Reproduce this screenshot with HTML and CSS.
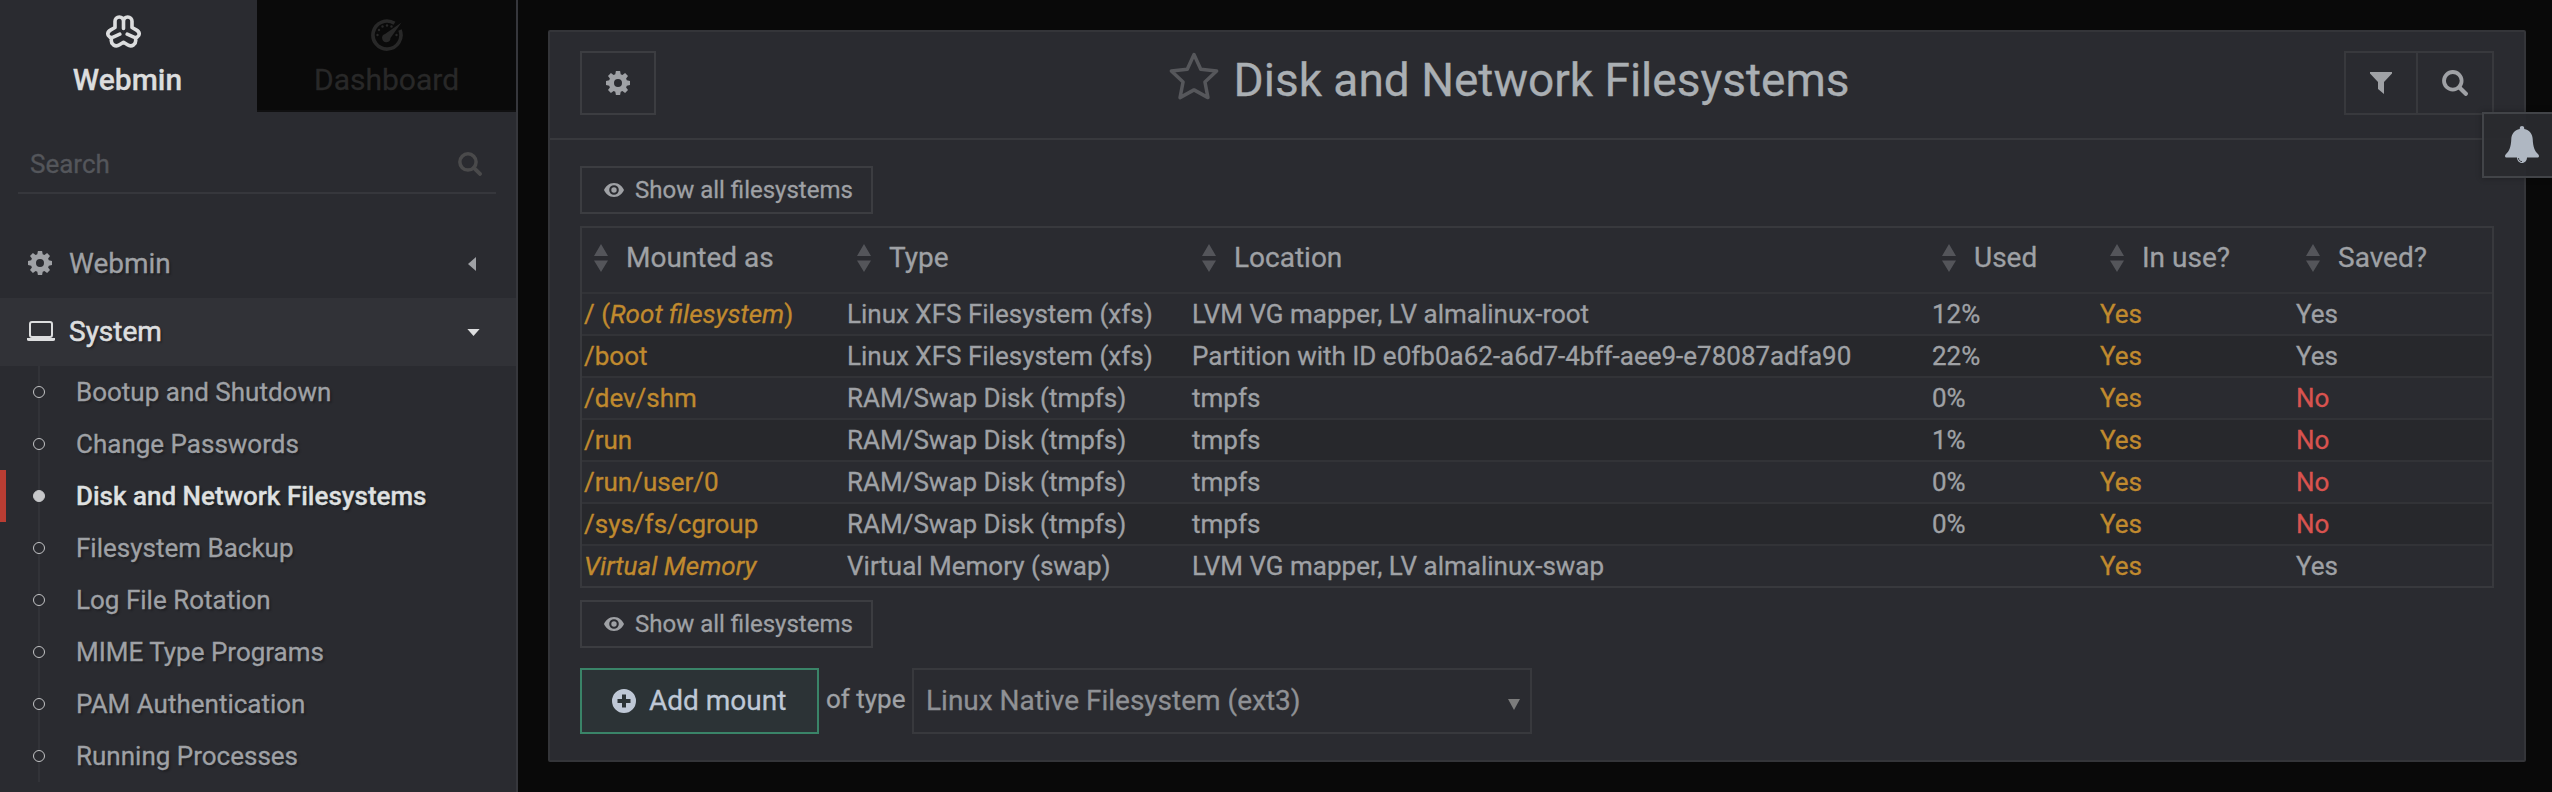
FILE: index.html
```html
<!DOCTYPE html>
<html lang="en">
<head>
<meta charset="utf-8">
<title>Disk and Network Filesystems</title>
<link rel="stylesheet" href="styles.css">
</head>
<body>
<svg width="0" height="0" class="defs">
  <defs>
    <symbol id="cog" viewBox="0 0 24 24"><path fill-rule="evenodd" d="M9.900 0h4.200l.6 3.200 1.700.7L19.100 2l2.900 2.900-1.900 2.700.7 1.700 3.200.6v4.200l-3.200.6-.7 1.700 1.900 2.700-2.900 2.900-2.700-1.900-1.700.7-.6 3.200H9.900l-.6-3.200-1.700-.7L4.900 22 2 19.100l1.900-2.700-.7-1.700L0 14.100V9.900l3.200-.6.7-1.700L2 4.900 4.900 2l2.700 1.900 1.700-.7zM12 8a4 4 0 1 0 0 8 4 4 0 0 0 0-8z"/></symbol>
    <symbol id="search" viewBox="0 0 26 26"><circle cx="10.800" cy="10.800" r="8.800" fill="none" stroke="currentColor" stroke-width="3.800"/><path d="M17.200 17.200l6.600 6.600" stroke="currentColor" stroke-width="4.200" stroke-linecap="round"/></symbol>
    <symbol id="eye" viewBox="0 0 20 14"><path fill-rule="evenodd" d="M10 0C15 0 18.500 3.500 20 7c-1.500 3.500-5 7-10 7S1.500 10.500 0 7C1.500 3.500 5 0 10 0zm0 2.200a4.800 4.800 0 1 0 0 9.600 4.800 4.800 0 0 0 0-9.600zM10 4.300a2.700 2.700 0 1 1 0 5.400 2.700 2.700 0 0 1 0-5.400z"/></symbol>
    <symbol id="sort" viewBox="0 0 14 28"><path d="M7 0l7 12H0zM0 16.500h14l-7 11.500z"/></symbol>
  </defs>
</svg>
<div class="app">
  <aside class="sidebar">
    <div class="tabs">
      <div class="tab tab-active">
        <svg class="logo" viewBox="0 0 35 33"><path fill="none" stroke="currentColor" stroke-width="3.600" stroke-linecap="round" stroke-linejoin="round" d="M17.500 13.500V6.500C17.500 3.500 15.700 2 13.300 2 10.800 2 9 3.700 9 6.300V12.500L4.800 14.900C2.200 16.400 1.300 18.600 2.400 20.600 3.700 22.700 6 22.900 8.300 21.700L13.800 19.200M17.500 6.500C17.500 3.500 19.300 2 21.700 2 24.200 2 26 3.700 26 6.300V12.500L30.200 14.900C32.800 16.400 33.700 18.600 32.600 20.600 31.300 22.700 29 22.900 26.700 21.700L21.200 19.200M5.500 23.300C4.900 26 5.500 28.500 7.400 29.900 9.500 31.200 11.500 31.100 13.500 29.700L17.500 27.300 21.500 29.700C23.500 31.100 25.500 31.200 27.600 29.900 29.500 28.500 30.100 26 29.500 23.300"/></svg>
        <span class="tab-label">Webmin</span>
      </div>
      <div class="tab tab-idle">
        <svg class="gauge" viewBox="0 0 32 32"><path d="M23.500 4.300A14 14 0 1 0 29 11" fill="none" stroke="currentColor" stroke-width="3.600"/><path d="M30.500 3.500L19.500 19a4.200 4.200 0 1 1-5.500-4z" fill="currentColor"/><g fill="currentColor"><circle cx="6.500" cy="16" r="1.200"/><circle cx="8" cy="11" r="1.200"/><circle cx="11.500" cy="7.500" r="1.200"/><circle cx="16" cy="6.500" r="1.200"/><circle cx="20.500" cy="7.500" r="1.200"/><circle cx="25.500" cy="16" r="1.200"/></g></svg>
        <span class="tab-label">Dashboard</span>
      </div>
    </div>
    <div class="search"><span>Search</span><svg class="i-search"><use href="#search"/></svg></div>
    <nav class="menu">
      <div class="group"><svg class="i-cog"><use href="#cog"/></svg><span>Webmin</span><svg class="arrow-left" viewBox="0 0 8 14"><path d="M8 0v14L0 7z"/></svg></div>
      <div class="group group-open"><svg class="i-laptop" viewBox="0 0 28 20"><rect x="3" y="1" width="22" height="15" rx="2" fill="none" stroke="currentColor" stroke-width="2"/><path d="M0 17h28v1.500q0 1.500-2 1.500H2q-2 0-2-1.500z"/></svg><span>System</span><svg class="arrow-down" viewBox="0 0 14 8"><path d="M0 0h14L7 8z"/></svg></div>
      <ul class="items">
        <li>Bootup and Shutdown</li>
        <li>Change Passwords</li>
        <li class="current">Disk and Network Filesystems</li>
        <li>Filesystem Backup</li>
        <li>Log File Rotation</li>
        <li>MIME Type Programs</li>
        <li>PAM Authentication</li>
        <li>Running Processes</li>
      </ul>
    </nav>
  </aside>
  <main class="main">
    <section class="panel">
      <header class="head">
        <div class="btn btn-icon"><svg class="i-cog"><use href="#cog"/></svg></div>
        <div class="title"><svg class="star" viewBox="2 0.500 48 49"><path d="M26 4l6.600 14.300 15.600 1.800-11.500 10.700 3 15.400L26 38.600l-13.700 7.600 3-15.400L3.800 20.100l15.600-1.800z" fill="none" stroke="currentColor" stroke-width="3.400" stroke-linejoin="round"/></svg><h1>Disk and Network Filesystems</h1></div>
        <div class="tools">
          <div class="tool tool-filter"><svg class="i-filter" viewBox="0 0 22 22"><path d="M0 0h22v1.500L14 10v12l-6-5v-7L0 1.500z"/></svg></div>
          <div class="tool tool-search"><svg class="i-find"><use href="#search"/></svg></div>
        </div>
      </header>
      <div class="body">
        <div class="btn btn-small"><svg class="i-eye"><use href="#eye"/></svg><span>Show all filesystems</span></div>
        <div class="table">
          <div class="row row-head">
            <div><svg class="i-sort"><use href="#sort"/></svg>Mounted as</div><div><svg class="i-sort"><use href="#sort"/></svg>Type</div><div><svg class="i-sort"><use href="#sort"/></svg>Location</div><div><svg class="i-sort"><use href="#sort"/></svg>Used</div><div><svg class="i-sort"><use href="#sort"/></svg>In use?</div><div><svg class="i-sort"><use href="#sort"/></svg>Saved?</div>
          </div>
          <div class="row"><a>/ (<i>Root filesystem</i>)</a><div>Linux XFS Filesystem (xfs)</div><div>LVM VG mapper, LV almalinux-root</div><div>12%</div><a>Yes</a><div>Yes</div></div>
          <div class="row"><a>/boot</a><div>Linux XFS Filesystem (xfs)</div><div>Partition with ID e0fb0a62-a6d7-4bff-aee9-e78087adfa90</div><div>22%</div><a>Yes</a><div>Yes</div></div>
          <div class="row"><a>/dev/shm</a><div>RAM/Swap Disk (tmpfs)</div><div>tmpfs</div><div>0%</div><a>Yes</a><div class="no">No</div></div>
          <div class="row"><a>/run</a><div>RAM/Swap Disk (tmpfs)</div><div>tmpfs</div><div>1%</div><a>Yes</a><div class="no">No</div></div>
          <div class="row"><a>/run/user/0</a><div>RAM/Swap Disk (tmpfs)</div><div>tmpfs</div><div>0%</div><a>Yes</a><div class="no">No</div></div>
          <div class="row"><a>/sys/fs/cgroup</a><div>RAM/Swap Disk (tmpfs)</div><div>tmpfs</div><div>0%</div><a>Yes</a><div class="no">No</div></div>
          <div class="row"><a><i>Virtual Memory</i></a><div>Virtual Memory (swap)</div><div>LVM VG mapper, LV almalinux-swap</div><div></div><a>Yes</a><div>Yes</div></div>
        </div>
        <div class="btn btn-small"><svg class="i-eye"><use href="#eye"/></svg><span>Show all filesystems</span></div>
        <div class="mount">
          <div class="add"><svg class="i-plus" viewBox="0 0 24 24"><path fill-rule="evenodd" d="M12 0a12 12 0 1 1 0 24 12 12 0 0 1 0-24zM10 5.500V10H5.500v4H10v4.500h4V14h4.500v-4H14V5.500z"/></svg><span>Add mount</span></div>
          <span class="of">of type</span>
          <div class="select"><span>Linux Native Filesystem (ext3)</span><svg class="drop" viewBox="0 0 12 11"><path d="M0 0h12L6 11z"/></svg></div>
        </div>
      </div>
    </section>
  </main>
  <div class="bell"><svg class="i-bell" viewBox="0 0 34 37"><path d="M17 0c1.300 0 2.200.9 2.200 2.200v.7C24.500 4 27.500 8 27.700 13c.3 8 2 12.500 5.500 15.200 1.500 1.600.7 3.300-1 3.300H22c0 3-2.200 5.500-5 5.500s-5-2.500-5-5.500H1.800c-1.700 0-2.500-1.700-1-3.300C4.300 25.500 6 21 6.300 13 6.500 8 9.500 4 14.800 2.900v-.7C14.800.9 15.700 0 17 0z"/><path d="M13.500 32c0 2 1.500 3.600 3.500 3.600" fill="none" stroke="#2a2b30" stroke-width=".9"/></svg></div>
</div>
</body>
</html>
```

FILE: styles.css
```css
* { box-sizing: border-box; }
body {
  margin: 0;
  background: #090909;
  color: #9fa1a5;
  font: 26px/40px Roboto, sans-serif;
  -webkit-text-stroke: .3px currentColor;
  overflow: hidden;
}
svg { display: block; flex: none; fill: currentColor; }
.defs { position: absolute; }
.app { display: flex; width: 2552px; height: 792px; position: relative; }

.sidebar {
  width: 518px;
  height: 792px;
  flex: none;
  background: #2a2b30;
  border-right: 2px solid #36373c;
  overflow: hidden;
}
.tabs { display: flex; height: 112px; font-size: 30px; line-height: 36px; }
.tab { display: flex; flex-direction: column; align-items: center; }
.tab-active { width: 257px; color: #dcddde; font-weight: 500; padding: 15px 2px 0 0; }
.tab-idle { width: 259px; color: #282828; background: #0a0a0a; border-bottom: 2px solid #101011; padding-top: 19px; }
.logo { width: 35px; height: 33px; margin: 0 8px 14px 0; }
.gauge { width: 32px; height: 32px; margin-bottom: 11px; }
.search {
  display: flex;
  justify-content: space-between;
  align-items: center;
  width: 478px;
  height: 82px;
  margin-left: 18px;
  padding: 24px 14px 0 12px;
  border-bottom: 2px solid #36373c;
  color: #54565b;
}
.i-search { width: 24px; height: 24px; color: #4a4a4b; }
.menu { padding-top: 36px; text-shadow: 2px 2px 2px rgba(0,0,0,.25); }
.group { display: flex; align-items: center; height: 68px; font-size: 28px; padding: 0 40px 0 28px; }
.group span { flex: 1; margin-left: 17px; }
.group .i-cog { margin-top: -2px; }
.group-open { background: #313237; color: #dddedf; padding: 0 36px 0 27px; }
.group-open span { margin-left: 14px; -webkit-text-stroke-width: .6px; }
.i-cog { width: 24px; height: 24px; }
.i-laptop { width: 28px; height: 20px; margin-top: -3px; }
.arrow-left { width: 8px; height: 14px; }
.arrow-down { width: 13px; height: 7px; }
.items {
  list-style: none;
  margin: 0;
  padding: 0;
  background: linear-gradient(#323338, #323338) 38px 0 / 2px 100% no-repeat;
}
.items li { display: flex; align-items: center; height: 52px; padding-left: 33px; border-left: 0 solid #b93d33; }
.items li::before {
  content: "";
  box-sizing: border-box;
  width: 12px;
  height: 12px;
  margin-right: 31px;
  border: 1.500px solid #c2c3c5;
  border-radius: 50%;
  background: #2a2b30;
}
.items .current { border-left-width: 6px; padding-left: 27px; color: #dfe0e0; font-weight: 500; }
.items .current::before { background: #c6c7c9; border-color: #c6c7c9; }

.main { flex: 1; padding: 30px 26px 30px 30px; }
.panel { height: 732px; background: #2a2b30; border: 2px solid #343539; border-radius: 2px; }
.head { display: flex; justify-content: space-between; height: 108px; padding: 19px 30px 0; border-bottom: 2px solid #38393d; }
.btn { display: flex; align-items: center; border: 2px solid #3c3d41; }
.btn-icon { width: 76px; height: 64px; justify-content: center; }
.title { display: flex; margin-left: 17px; }
.star { width: 52px; height: 50px; color: #56575b; }
h1 { margin: 1px 0 0 14px; font-size: 46px; line-height: 56px; font-weight: 400; color: #aaafb3; }
.tools { display: flex; width: 150px; height: 64px; border: 2px solid #38393d; }
.tool { display: flex; align-items: center; justify-content: center; }
.tool-filter { width: 72px; border-right: 2px solid #38393d; }
.tool-search { flex: 1; }
.i-filter { width: 22px; height: 22px; }
.i-find { width: 26px; height: 26px; }
.body { padding: 26px 30px 0; }
.btn-small { width: 293px; height: 48px; padding-left: 22px; font-size: 24px; }
.i-eye { width: 20px; height: 14px; margin-right: 11px; }
.table { margin: 12px 0; border: 2px solid #38393d; }
.row { display: grid; grid-template-columns: 263px 345px 740px 168px 196px 1fr; height: 42px; border-bottom: 2px solid #323337; padding-left: 2px; line-height: 41px; }
.row:last-child { height: 40px; border-bottom: 0; }
.row:nth-child(odd) { background: #27282c; }
.row:last-child, .row-head:first-child { background: none; }
.row a { color: #c08a2e; }
.row .no { color: #d9534f; }
.row-head { height: 66px; font-size: 28px; line-height: 60px; }
.row-head div { display: flex; padding-left: 10px; }
.i-sort { width: 14px; height: 28px; margin: 16px 18px 0 0; color: #54555a; }
.mount { display: flex; margin-top: 20px; height: 66px; }
.add { display: flex; align-items: center; width: 239px; border: 2px solid #3a8468; background: #2c3336; color: #bfc8d6; font-size: 28px; padding-left: 30px; }
.i-plus { width: 24px; height: 24px; margin-right: 13px; }
.of { width: 93px; padding-left: 7px; line-height: 63px; }
.select { display: flex; justify-content: space-between; align-items: center; width: 620px; border: 2px solid #38393d; padding: 0 10px 0 12px; font-size: 28px; color: #8f9195; }
.drop { width: 12px; height: 11px; margin-top: 6px; color: #7c7c7c; }
.bell {
  position: absolute;
  right: 0;
  top: 112px;
  width: 70px;
  height: 66px;
  padding: 12px 0 0 21px;
  border: 2px solid #424448;
  border-right: 0;
  background: #292a2ef2;
  box-shadow: 0 0 6px rgba(0,0,0,.3);
}
.i-bell { width: 34px; height: 37px; color: #afb7c2; }
```
